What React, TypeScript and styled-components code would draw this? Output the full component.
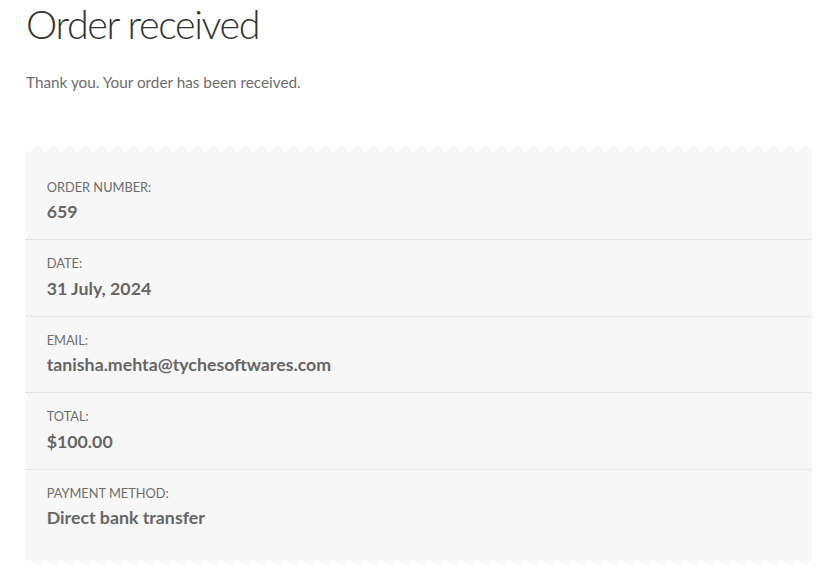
import React from "react";
import styled, { createGlobalStyle } from "styled-components";

const Global = createGlobalStyle`
  html, body { margin: 0; padding: 0; background: #ffffff; }
  body { font-family: Lato, "Liberation Sans", sans-serif; color: #6d6d6d; }
`;

const Page = styled.main`
  padding: 0 24px 0 26px;
`;

const Title = styled.h1`
  margin: 0;
  padding-top: 2px;
  font-family: Lato, "Liberation Sans", sans-serif;
  font-weight: 300;
  font-size: 39.5px;
  line-height: 44px;
  color: #333333;
  letter-spacing: -1.4px;
`;

const Lead = styled.p`
  margin: 23px 0 0;
  font-size: 15.3px;
  line-height: 26px;
  color: #6d6d6d;
`;

const Overview = styled.section`
  margin-top: 49px;
  display: flex;
  flex-direction: column;
`;

const Edge = styled.div<{ $bottom?: boolean }>`
  height: 8px;
  background-repeat: repeat-x;
  background-size: 16px 8px;
  background-position: 3px 0;
  background-image: ${(p) =>
    p.$bottom
      ? "conic-gradient(from -45deg at 50% 100%, #f7f7f7 90deg, transparent 0)"
      : "conic-gradient(from 135deg at 50% 0, #f7f7f7 90deg, transparent 0)"};
`;

const List = styled.ul`
  list-style: none;
  margin: 0;
  padding: 0;
  background: #f7f7f7;
`;

const Item = styled.li`
  padding: 12.8px 20.7px;
  border-bottom: 1px dotted #d6d6d6;
  &:first-child { padding-top: 24.5px; }
  &:last-child { border-bottom: 0; padding-bottom: 25.5px; }
`;

const Label = styled.div`
  font-size: 12.8px;
  line-height: 20.7px;
  text-transform: uppercase;
  color: #6d6d6d;
`;

const Value = styled.strong`
  display: block;
  font-size: 17.75px;
  line-height: 29.2px;
  font-weight: 700;
  color: #666666;
`;

const rows = [
  { label: "Order number:", value: "659" },
  { label: "Date:", value: "31 July, 2024" },
  { label: "Email:", value: "tanisha.mehta@tychesoftwares.com" },
  { label: "Total:", value: "$100.00" },
  { label: "Payment method:", value: "Direct bank transfer" },
];

export default function App() {
  return (
    <Page>
      <Global />
      <Title>Order received</Title>
      <Lead>Thank you. Your order has been received.</Lead>
      <Overview>
        <Edge />
        <List>
          {rows.map((r) => (
            <Item key={r.label}>
              <Label>{r.label}</Label>
              <Value>{r.value}</Value>
            </Item>
          ))}
        </List>
        <Edge $bottom />
      </Overview>
    </Page>
  );
}
